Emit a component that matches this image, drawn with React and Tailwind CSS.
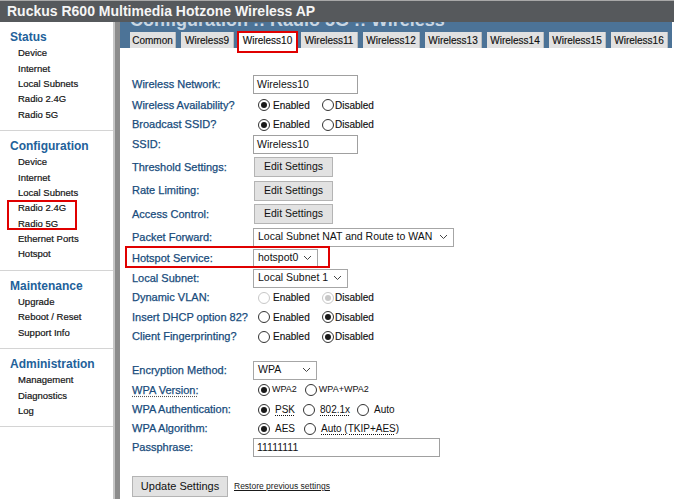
import React from 'react';

const font = { fontFamily: '"Liberation Sans", Arial, sans-serif' };

const sections = [
  { title: 'Status', items: ['Device', 'Internet', 'Local Subnets', 'Radio 2.4G', 'Radio 5G'] },
  {
    title: 'Configuration',
    items: ['Device', 'Internet', 'Local Subnets', 'Radio 2.4G', 'Radio 5G', 'Ethernet Ports', 'Hotspot'],
    boxed: [3, 4],
  },
  { title: 'Maintenance', items: ['Upgrade', 'Reboot / Reset', 'Support Info'] },
  { title: 'Administration', items: ['Management', 'Diagnostics', 'Log'] },
];

const tabs = [
  ['Common', 'w-[46px]'],
  ['Wireless9', 'w-[53px]'],
  ['Wireless10', 'w-[57px]'],
  ['Wireless11', 'w-[57px]'],
  ['Wireless12', 'w-[57px]'],
  ['Wireless13', 'w-[57px]'],
  ['Wireless14', 'w-[57px]'],
  ['Wireless15', 'w-[57px]'],
  ['Wireless16', 'w-[57px]'],
];

function Sidebar() {
  return (
    <div className="w-[113px] shrink-0 bg-white">
      {sections.map((s) => (
        <div key={s.title} className="pt-[8px] pb-[8px] border-b border-[#d4d4d4]">
          <div className="pl-[10px] text-[12px] leading-[15.33px] font-bold text-[#22619a]">{s.title}</div>
          <div className="pl-[18px] text-[9.5px] leading-[15.33px] text-[#151515] [-webkit-text-stroke:0.2px_#151515]">
            {s.boxed ? (
              <>
                {s.items.slice(0, 3).map((i) => <div key={i}>{i}</div>)}
                <div className="relative">
                  <div>{s.items[3]}</div>
                  <div>{s.items[4]}</div>
                  <div className="absolute left-[-11px] top-0 w-[70px] bottom-[1px] border-2 border-[#e00000]" />
                </div>
                {s.items.slice(5).map((i) => <div key={i}>{i}</div>)}
              </>
            ) : (
              s.items.map((i) => <div key={i}>{i}</div>)
            )}
          </div>
        </div>
      ))}
    </div>
  );
}

function Radio({ checked, disabled }) {
  return (
    <span
      className={
        disabled
          ? 'w-[12px] h-[12px] shrink-0 rounded-full border border-[#c8c8c8] bg-white flex items-center justify-center'
          : 'w-[12px] h-[12px] shrink-0 rounded-full border border-[#333] bg-white flex items-center justify-center'
      }
    >
      {checked && (
        <span className={disabled ? 'w-[6px] h-[6px] rounded-full bg-[#c8c8c8]' : 'w-[6px] h-[6px] rounded-full bg-[#1a1a1a]'} />
      )}
    </span>
  );
}

function EnDis({ on, disabled }) {
  return (
    <div className="flex items-center text-[10px] text-[#111] pl-[5px] [-webkit-text-stroke:0.15px_#111]">
      <span className="inline-flex items-center w-[64px]">
        <Radio checked={on} disabled={disabled} />
        <span className="ml-[3px]">Enabled</span>
      </span>
      <span className="inline-flex items-center">
        <Radio checked={!on} disabled={disabled} />
        <span className="ml-[1px]">Disabled</span>
      </span>
    </div>
  );
}

function Chevron() {
  return (
    <svg width="9" height="6" viewBox="0 0 9 6" className="shrink-0">
      <polyline points="1,1 4.5,4.5 8,1" fill="none" stroke="#444" strokeWidth="1" />
    </svg>
  );
}

function Select({ value, w }) {
  return (
    <div className={`${w} h-[19px] border border-[#a6a6a6] bg-white flex items-center justify-between pl-[4px] pr-[5px] text-[10.5px] text-[#111]`}>
      <span>{value}</span>
      <Chevron />
    </div>
  );
}

function Input({ value, w }) {
  return (
    <div className={`${w} h-[19px] border border-[#a0a0a0] bg-white flex items-center pl-[3px] text-[10.5px] text-[#111]`}>
      {value}
    </div>
  );
}

function EditBtn() {
  return (
    <div className="ml-[1px] w-[79px] h-[20px] border border-[#b4b4b4] bg-[#e2e2e2] flex items-center justify-center text-[10.5px] text-[#111]">
      Edit Settings
    </div>
  );
}

function Row({ label, h, children, dotted }) {
  return (
    <div className={`${h} flex items-center`}>
      <div className="w-[121px] shrink-0 text-[11px] text-[#184c7c] [-webkit-text-stroke:0.25px_#184c7c]">
        {dotted ? <span className="underline decoration-dotted decoration-[#555] underline-offset-2">{label}</span> : label}
      </div>
      {children}
    </div>
  );
}

function Opt({ checked, label, ul, gap }) {
  return (
    <span className={`inline-flex items-center ${gap}`}>
      <Radio checked={checked} />
      <span className={ul ? 'ml-[5px] underline decoration-dotted underline-offset-2' : 'ml-[5px]'}>{label}</span>
    </span>
  );
}

export default function App() {
  return (
    <div className="w-[674px] h-[499px] overflow-hidden flex flex-col bg-white" style={font}>
      <div className="relative z-10 h-[22px] shrink-0 bg-[#56595c] border-t border-[#a8a8a8] pl-[7px] text-[14px] leading-[21px] font-bold text-[#f5f5f5]">
        Ruckus R600 Multimedia Hotzone Wireless AP
      </div>
      <div className="flex flex-1 min-h-0">
        <Sidebar />
        <div className="w-[7px] shrink-0 bg-[#8c8c8c] border-l-2 border-[#c6c6c6]" />
        <div className="flex-1 flex flex-col pr-[2px]">
          <div className="bg-[#4c7397] h-[26px] shrink-0 overflow-hidden">
            <div className="h-[10px] pl-[10px] overflow-hidden">
              <p className="-mt-[11px] text-[18px] leading-[18px] font-bold text-[#c9d6e2] whitespace-nowrap">
                Configuration :: Radio 5G :: Wireless
              </p>
            </div>
            <div className="flex gap-[5px] pl-[10px] h-[16px]">
              {tabs.map(([t, w]) =>
                t === 'Wireless10' ? (
                  <div key={t} className={`${w} bg-white flex items-center justify-center text-[10px] text-[#111] [-webkit-text-stroke:0.15px_#111]`}>
                    {t}
                  </div>
                ) : (
                  <div key={t} className={`${w} bg-[#e1e1e1] border-r border-[#bdbdbd] flex items-center justify-center text-[10px] text-[#111] [-webkit-text-stroke:0.15px_#111]`}>
                    {t}
                  </div>
                )
              )}
            </div>
          </div>

          <div className="relative pt-[26px] pl-[12px] flex flex-col">
            <div className="absolute left-[117px] -top-[17px] w-[61px] h-[22px] border-2 border-[#e00000]" />
            <Row label="Wireless Network:" h="h-[21px]">
              <Input value="Wireless10" w="w-[105px]" />
            </Row>
            <Row label="Wireless Availability?" h="h-[20px]">
              <EnDis on />
            </Row>
            <Row label="Broadcast SSID?" h="h-[19px]">
              <EnDis on />
            </Row>
            <Row label="SSID:" h="h-[21px]">
              <Input value="Wireless10" w="w-[105px]" />
            </Row>
            <Row label="Threshold Settings:" h="h-[24px]">
              <EditBtn />
            </Row>
            <Row label="Rate Limiting:" h="h-[23px]">
              <EditBtn />
            </Row>
            <Row label="Access Control:" h="h-[24px]">
              <EditBtn />
            </Row>
            <Row label="Packet Forward:" h="h-[22px]">
              <Select value="Local Subnet NAT and Route to WAN" w="w-[201px]" />
            </Row>
            <div className="relative">
              <Row label="Hotspot Service:" h="h-[20px]">
                <Select value="hotspot0" w="w-[65px]" />
              </Row>
              <div className="absolute -left-[7px] w-[205px] -top-[2px] bottom-0 border-2 border-[#e00000]" />
            </div>
            <Row label="Local Subnet:" h="h-[20px]">
              <Select value="Local Subnet 1" w="w-[95px]" />
            </Row>
            <Row label="Dynamic VLAN:" h="h-[19px]">
              <EnDis on={false} disabled />
            </Row>
            <Row label="Insert DHCP option 82?" h="h-[20px]">
              <EnDis on={false} />
            </Row>
            <Row label="Client Fingerprinting?" h="h-[19px]">
              <EnDis on={false} />
            </Row>
            <div className="h-[14px]" />
            <Row label="Encryption Method:" h="h-[20px]">
              <Select value="WPA" w="w-[64px]" />
            </Row>
            <Row label="WPA Version:" h="h-[20px]" dotted>
              <div className="flex items-center pl-[5px] text-[9px] text-[#111]">
                <span className="inline-flex items-center mr-[8px]">
                  <Radio checked />
                  <span className="ml-[2px]">WPA2</span>
                </span>
                <span className="inline-flex items-center">
                  <Radio />
                  <span className="ml-[2px]">WPA+WPA2</span>
                </span>
              </div>
            </Row>
            <Row label="WPA Authentication:" h="h-[19px]">
              <div className="flex items-center pl-[5px] text-[10px] text-[#111]">
                <Opt checked label="PSK" ul gap="mr-[8px]" />
                <Opt label="802.1x" ul gap="mr-[7px]" />
                <Opt label="Auto" gap="" />
              </div>
            </Row>
            <Row label="WPA Algorithm:" h="h-[19px]">
              <div className="flex items-center pl-[5px] text-[10px] text-[#111]">
                <Opt checked label="AES" gap="mr-[9px]" />
                <Opt label="Auto (TKIP+AES)" ul gap="" />
              </div>
            </Row>
            <Row label="Passphrase:" h="h-[19px]">
              <Input value="11111111" w="w-[187px]" />
            </Row>
            <div className="h-[19px]" />
            <div className="h-[21px] flex items-center">
              <div className="w-[96px] h-[21px] border border-[#b4b4b4] bg-[#e2e2e2] flex items-center justify-center text-[11px] text-[#111]">
                Update Settings
              </div>
              <a className="ml-[6px] text-[8.5px] text-[#1a1a1a] underline">Restore previous settings</a>
            </div>
          </div>
        </div>
      </div>
    </div>
  );
}
